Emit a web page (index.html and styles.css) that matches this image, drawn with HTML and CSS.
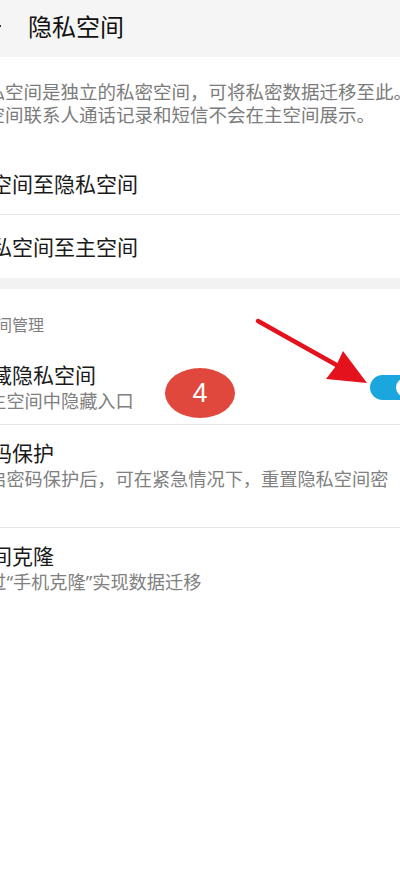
FILE: index.html
```html
<!DOCTYPE html>
<html lang="zh-CN">
<head>
  <meta charset="UTF-8" />
  <meta name="viewport" content="width=device-width, initial-scale=1.0"/>
  <title>隐私空间</title>
  <link rel="stylesheet" href="styles.css">
</head>
<body>
  <div class="screen">
    <header class="topbar">
      <svg class="back" viewBox="0 0 21 20" aria-hidden="true">
        <path d="M21 10H2M9 3L2 10l7 7" fill="none" stroke="#333" stroke-width="2"/>
      </svg>
      <h1 class="title">隐私空间</h1>
    </header>

    <p class="intro">隐私空间是独立的私密空间，可将私密数据迁移至此。<br>该空间联系人通话记录和短信不会在主空间展示。</p>

    <div class="item plain">主空间至隐私空间</div>
    <div class="item plain last">隐私空间至主空间</div>

    <div class="band"></div>

    <div class="section-title">空间管理</div>

    <div class="item has-switch">
      <div class="item-text">
        <div class="item-title">隐藏隐私空间</div>
        <div class="item-sub">在主空间中隐藏入口</div>
      </div>
      <div class="switch on"><span class="knob"></span></div>
    </div>

    <div class="item tall">
      <div class="item-text">
        <div class="item-title">密码保护</div>
        <div class="item-sub">开启密码保护后，可在紧急情况下，重置隐私空间密码</div>
      </div>
    </div>

    <div class="item last">
      <div class="item-text">
        <div class="item-title">空间克隆</div>
        <div class="item-sub">通过<span class="q">“</span>手机克隆<span class="q">”</span>实现数据迁移</div>
      </div>
    </div>
  </div>

  <!-- tutorial markup over the screenshot -->
  <svg class="pointer" viewBox="250 312 125 78" aria-hidden="true">
    <line x1="258" y1="321" x2="340" y2="367" stroke="#e3121d" stroke-width="4.5" stroke-linecap="round"/>
    <polygon points="367,383 326,379 336,366 343,351" fill="#e3121d"/>
  </svg>
  <div class="step">4</div>
</body>
</html>
```

FILE: styles.css
```css
:root {
  --bar: #f5f5f5;
  --band: #f2f2f2;
  --line: #e6e6e6;
  --text: #1a1a1a;
  --muted: #808080;
  --accent: #1ba7de;
  --mark: #e0473d;
}

html, body {
  margin: 0;
  padding: 0;
  overflow: hidden;
  background: #fff;
}

body {
  position: relative;
  width: 400px;
  height: 882px;
  font-family: "Noto Sans CJK SC", "Noto Sans", sans-serif;
  color: var(--text);
}

/* the capture is cropped on both sides, so the screen is wider than the window */
.screen {
  width: 472px;
  margin-left: -40px;
}

.topbar {
  height: 57px;
  box-sizing: border-box;
  background: var(--bar);
  display: flex;
  align-items: center;
  padding: 0 0 5px 20px;
}

.back {
  width: 21px;
  height: 20px;
  margin-right: 27px;
  flex: none;
}

.title {
  margin: 0;
  font-size: 24px;
  font-weight: 400;
  line-height: 1;
  color: #111;
}

.intro {
  margin: 0;
  padding: 23px 0 27px 8px;
  font-size: 18.5px;
  line-height: 23px;
  color: #7b7b7b;
  white-space: nowrap;
}

.item {
  display: flex;
  align-items: center;
  padding: 14px 44px 10px 10px;
  border-bottom: 1px solid var(--line);
}

.item.last {
  border-bottom: none;
}

.item.plain {
  height: 62px;
  padding-top: 0;
  padding-bottom: 0;
  font-size: 21px;
  line-height: 1;
  box-sizing: border-box;
}

.item.plain.last {
  height: 63px;
}

.item.tall {
  padding-bottom: 35px;
}

.item.has-switch {
  padding-right: 14px;
}

.item-text {
  flex: 1;
  min-width: 0;
  overflow: hidden;
}

.item-title {
  font-size: 21px;
  line-height: 26px;
}

.item-sub {
  font-size: 18.2px;
  line-height: 27px;
  color: var(--muted);
  white-space: nowrap;
}

.q {
  font-family: "Noto Sans", sans-serif;
}

.band {
  height: 11px;
  background: var(--band);
}

.section-title {
  padding: 24px 0 12px 20px;
  font-size: 16px;
  line-height: 22px;
  color: var(--muted);
}

.switch {
  flex: none;
  width: 48px;
  height: 25px;
  border-radius: 13px;
  background: #ccc;
  position: relative;
}

.switch.on {
  background: var(--accent);
}

.knob {
  position: absolute;
  top: 3px;
  right: 3px;
  width: 19px;
  height: 19px;
  border-radius: 50%;
  background: #fff;
}

.pointer {
  position: absolute;
  left: 250px;
  top: 312px;
  width: 125px;
  height: 78px;
}

.step {
  position: absolute;
  left: 165px;
  top: 368px;
  width: 70px;
  height: 50px;
  border-radius: 50%;
  background: var(--mark);
  color: #fff;
  font-family: "Liberation Sans", Arial, sans-serif;
  font-size: 27px;
  line-height: 50px;
  text-align: center;
}
```
